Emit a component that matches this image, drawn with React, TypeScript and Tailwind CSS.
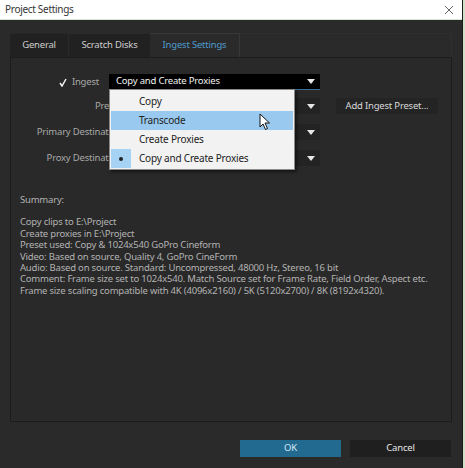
import React from 'react';

const font = { fontFamily: '"Noto Sans", "Open Sans", sans-serif' };

const Arrow: React.FC = () => (
  <svg width="8" height="5" viewBox="0 0 8 5" className="shrink-0">
    <path d="M0 0 H8 L4 5 Z" fill="#e6e6e6" />
  </svg>
);

const summary = [
  'Copy clips to E:\\Project',
  'Create proxies in E:\\Project',
  'Preset used: Copy & 1024x540 GoPro Cineform',
  'Video: Based on source, Quality 4, GoPro CineForm',
  'Audio: Based on source. Standard: Uncompressed, 48000 Hz, Stereo, 16 bit',
  'Comment: Frame size set to 1024x540. Match Source set for Frame Rate, Field Order, Aspect etc.',
  'Frame size scaling compatible with 4K (4096x2160) / 5K (5120x2700) / 8K (8192x4320).',
];

const menuItems = ['Copy', 'Transcode', 'Create Proxies', 'Copy and Create Proxies'];

const App: React.FC = () => {
  return (
    <div className="w-[465px] h-[468px] flex overflow-hidden text-[9.5px] tracking-[-0.2px]" style={font}>
      <div className="w-[462px] min-w-0 flex flex-col">
        {/* Title bar */}
        <div className="h-[20px] bg-white flex items-center justify-between pl-[5px] pr-[8px] border-b border-[#d5e3d2]">
          <span className="text-[10px] text-[#333] tracking-[-0.3px]">Project Settings</span>
          <svg width="10" height="10" viewBox="0 0 10 10">
            <path d="M1 1 L9 9 M9 1 L1 9" stroke="#666" strokeWidth="1" />
          </svg>
        </div>

        {/* Body */}
        <div className="flex-1 bg-[#2a2a2a] flex flex-col pl-[10px] pr-[10px] pt-[13px]">
          {/* Tabs */}
          <div className="h-[24px] flex items-stretch">
            <div className="w-[58px] bg-[#212121] flex items-center justify-center text-[#cfcfcf] border-t border-[#262626]">General</div>
            <div className="w-[82px] bg-[#212121] flex items-center justify-center text-[#cfcfcf] border-l border-t border-[#2a2a2a]">Scratch Disks</div>
            <div className="w-[90px] bg-[#2a2a2a] flex items-center justify-center text-[#4e9acd] border-t border-r border-[#383838]">Ingest Settings</div>
            <div className="flex-1 border-t border-r border-[#2f2f2f]" />
          </div>

          {/* Panel */}
          <div className="h-[365px] border border-[#1c1c1c] bg-[#292929] relative flex flex-col">
            <div className="flex flex-col pt-[16px]">
              {/* Ingest row */}
              <div className="flex items-center h-[16px]">
                <div className="w-[98px] flex justify-end items-center pr-[10px] gap-[5px]">
                  <svg width="8" height="9" viewBox="0 0 8 9">
                    <path d="M1 5 L3 8 L7 1" stroke="#f4f4f4" strokeWidth="1.5" fill="none" />
                  </svg>
                  <span className="text-[#a8a8a8]">Ingest</span>
                </div>
                <div className="w-[211px] h-[16px] bg-black border-b border-[#3b6f95] flex items-center justify-between pl-[7px] pr-[5px] text-[#f2f2f2]">
                  <span>Copy and Create Proxies</span>
                  <Arrow />
                </div>
              </div>

              {/* Preset row */}
              <div className="flex items-center h-[16px] mt-[8px]">
                <div className="w-[115px] text-right pr-[4px] text-[#a8a8a8]">Preset</div>
                <div className="w-[194px] h-[16px] bg-[#232323] flex items-center justify-end pr-[5px]">
                  <Arrow />
                </div>
                <div className="ml-[16px] w-[102px] h-[16px] bg-[#242424] flex items-center justify-center text-[#d8d8d8]">
                  Add Ingest Preset...
                </div>
              </div>

              <div className="flex items-center h-[16px] mt-[10px]">
                <div className="w-[115px] text-right pr-[4px] text-[#a8a8a8] whitespace-nowrap">Primary Destination</div>
                <div className="w-[194px] h-[16px] bg-[#232323] flex items-center justify-end pr-[5px]">
                  <Arrow />
                </div>
              </div>

              <div className="flex items-center h-[16px] mt-[10px]">
                <div className="w-[115px] text-right pr-[4px] text-[#a8a8a8] whitespace-nowrap">Proxy Destination</div>
                <div className="w-[194px] h-[16px] bg-[#232323] flex items-center justify-end pr-[5px]">
                  <Arrow />
                </div>
              </div>
            </div>

            {/* Summary */}
            <div className="pl-[9px] pt-[28px] text-[#b3b3b3] leading-[11.4px]">
              <div>Summary:</div>
              <div className="mt-[11px]">
                {summary.map((l) => (
                  <div key={l} className="whitespace-nowrap">{l}</div>
                ))}
              </div>
            </div>

            {/* Popup menu */}
            <div className="absolute left-[98px] top-[31px] w-[186px] h-[81px] bg-[#f2f2f2] border border-[#8a8a8a] py-[2px] px-[1px] shadow-[2px_2px_3px_rgba(0,0,0,0.5)]">
              {menuItems.map((m, i) => (
                <div
                  key={m}
                  className={`h-[19px] flex items-center text-[#222] ${i === 1 ? 'bg-[#99c9ef]' : ''}`}
                >
                  <div className={`w-[20px] h-[19px] flex items-center justify-center ${i === 3 ? 'bg-[#a6d2f4]' : ''}`}>
                    {i === 3 && <div className="w-[4px] h-[4px] rounded-full bg-[#222]" />}
                  </div>
                  <span className="pl-[8px] text-[10px]">{m}</span>
                </div>
              ))}
              {/* cursor */}
              <svg className="absolute left-[149px] top-[23px]" width="12" height="18" viewBox="0 0 12 18">
                <path d="M1 1 L1 14 L4 11 L6.5 16.5 L8.5 15.5 L6 10 L10.5 10 Z" fill="#fff" stroke="#111" strokeWidth="1" strokeLinejoin="round" />
              </svg>
            </div>
          </div>

          {/* Buttons */}
          <div className="flex justify-end gap-[9px] mt-[18px] pr-[1px]">
            <div className="w-[101px] h-[17px] bg-[#236a90] flex items-center justify-center text-[#d4e6f0]">OK</div>
            <div className="w-[101px] h-[17px] bg-[#1f1f1f] flex items-center justify-center text-[#e6e6e6]">Cancel</div>
          </div>
        </div>
      </div>
      <div className="w-[1px] bg-[#1a1a1a]" />
      <div className="w-[2px] bg-[#cfe2c9]" />
    </div>
  );
};

export default App;
